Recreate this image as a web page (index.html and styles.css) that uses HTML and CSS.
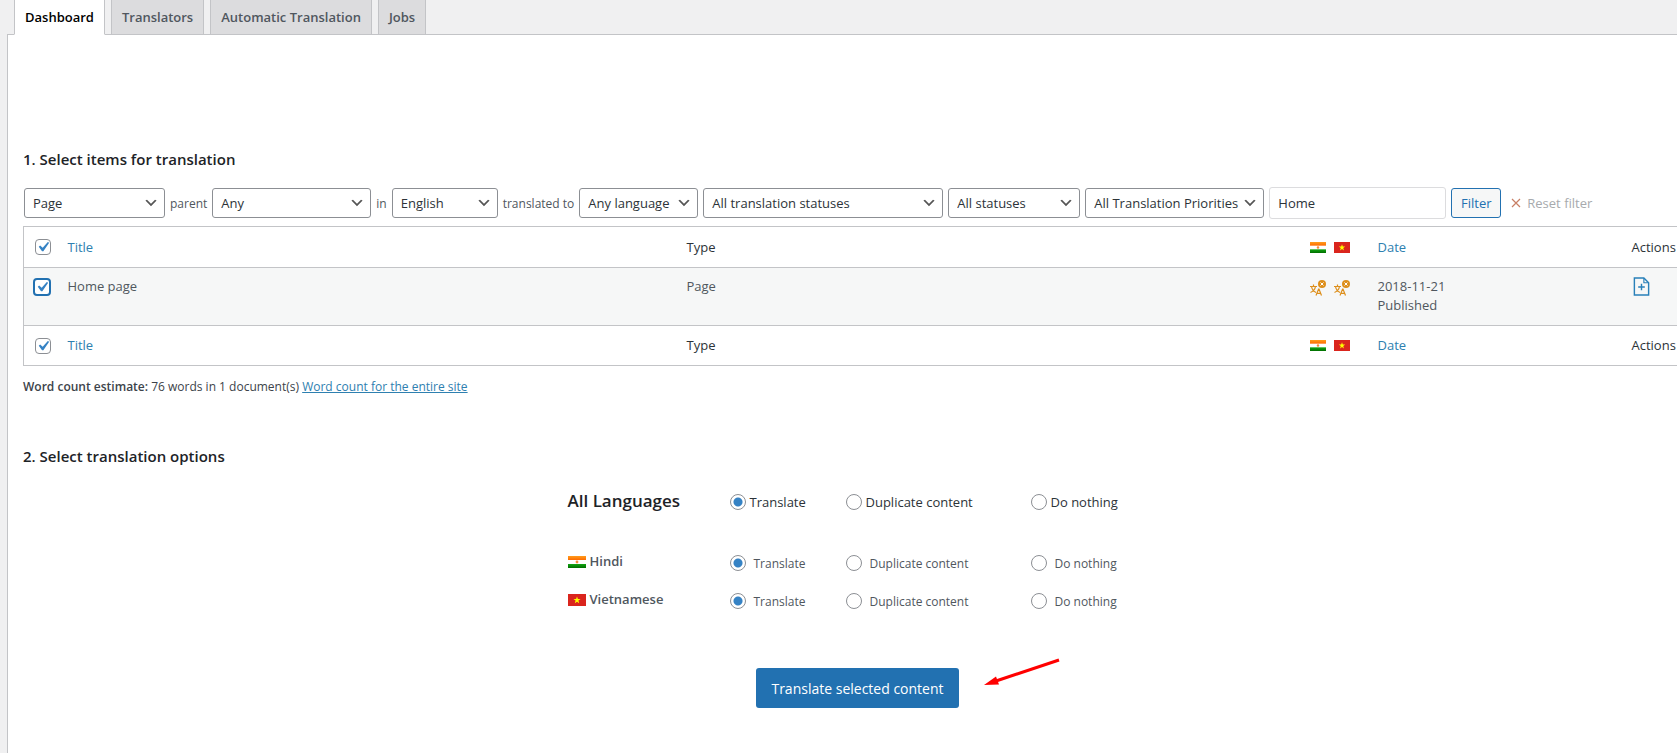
FILE: index.html
```html
<!DOCTYPE html>
<html lang="en">

<head>
    <meta charset="utf-8" />
    <meta name="viewport" content="width=device-width, initial-scale=1.0">
    <title>Translation Management</title>
    <link rel="stylesheet" href="styles.css">
</head>

<body>
    <!-- shared icons -->
    <svg class="sprite" aria-hidden="true">
        <linearGradient id="saffron" x2="0" y2="1">
            <stop offset="0" stop-color="#ff9d1c" />
            <stop offset="1" stop-color="#ff6a00" />
        </linearGradient>
        <linearGradient id="green" x2="0" y2="1">
            <stop offset="0" stop-color="#12a512" />
            <stop offset="1" stop-color="#006e00" />
        </linearGradient>
        <symbol id="flag-hi" viewBox="0 0 18 12" preserveAspectRatio="none">
            <rect width="18" height="12" fill="#fff" />
            <rect width="18" height="4" fill="url(#saffron)" />
            <rect y="8" width="18" height="4" fill="url(#green)" />
            <circle cx="9" cy="6" r="1.4" fill="#f58a3c" />
        </symbol>
        <symbol id="flag-vi" viewBox="0 0 18 12" preserveAspectRatio="none">
            <rect width="18" height="12" fill="#da251d" />
            <path d="M9 2.4l.9 2.6h2.7l-2.2 1.6.8 2.7L9 7.7 6.8 9.3l.8-2.7L5.4 5h2.7z" fill="#ff0" />
        </symbol>
        <symbol id="not-translated" viewBox="0 0 16 16">
            <g fill="none" stroke="#dd8f1c" stroke-width="1.2">
                <path d="M0 6.5h7M3.5 4.5v2M1.5 6.5c.5 3 2.2 4.7 4.500 6M5.500 6.500c-.5 3-2.500 5-5 6" />
                <path d="M6 15.500l2.600-6.500h.4l2.500 6.500M7 13.300h3.800" />
            </g>
            <circle cx="12" cy="4" r="4" fill="#dd8f1c" />
            <path d="M10.500 2.500l3 3m0-3l-3 3" stroke="#fff" />
        </symbol>
        <symbol id="add-doc" viewBox="0 0 17 20">
            <g fill="none" stroke="#2980b9" stroke-width="1.5">
                <path d="M1 1h10l5 5v13H1z" />
                <path d="M11 1v5h5" stroke-width="1.2" />
                <path d="M5 10.500h7M8.500 7v7" />
            </g>
        </symbol>
    </svg>

    <nav class="tabs">
        <a class="tab active" href="#">Dashboard</a>
        <a class="tab" href="#">Translators</a>
        <a class="tab" href="#">Automatic Translation</a>
        <a class="tab" href="#">Jobs</a>
    </nav>

    <main class="panel">
        <h2>1. Select items for translation</h2>
        <form class="filters">
            <select class="w-type" aria-label="Type">
                <option>Page</option>
            </select>
            <label for="parent">parent</label>
            <select class="w-parent" id="parent">
                <option>Any</option>
            </select>
            <label for="from">in</label>
            <select class="w-from" id="from">
                <option>English</option>
            </select>
            <label for="to">translated to</label>
            <select class="w-to" id="to">
                <option>Any language</option>
            </select>
            <select class="w-translation" aria-label="Translation status">
                <option>All translation statuses</option>
            </select>
            <select class="w-status" aria-label="Status">
                <option>All statuses</option>
            </select>
            <select class="w-priority" aria-label="Translation priority">
                <option>All Translation Priorities</option>
            </select>
            <input class="search" type="text" value="Home" aria-label="Title">
            <button class="filterBtn" type="button">Filter</button>
            <button class="resetBtn" type="button">
                <svg width="10" height="10" viewBox="0 0 10 10"><path d="M1 1l8 8M9 1l-8 8" stroke="#c87f65" stroke-width="1.2" /></svg>
                Reset filter
            </button>
        </form>

        <table class="items">
            <thead>
                <tr>
                    <th class="col-check"><input type="checkbox" checked aria-label="Select all"></th>
                    <th class="col-title"><a href="#">Title</a></th>
                    <th class="col-type">Type</th>
                    <th class="col-lang">
                        <svg class="flag"><use href="#flag-hi" /></svg>
                        <svg class="flag"><use href="#flag-vi" /></svg>
                    </th>
                    <th class="col-date"><a href="#">Date</a></th>
                    <th class="col-actions">Actions</th>
                </tr>
            </thead>
            <tbody>
                <tr>
                    <td class="col-check"><input class="focused" type="checkbox" checked aria-label="Select Home page"></td>
                    <td>Home page</td>
                    <td>Page</td>
                    <td class="col-lang">
                        <svg class="status"><use href="#not-translated" /></svg>
                        <svg class="status"><use href="#not-translated" /></svg>
                    </td>
                    <td>2018-11-21<br>Published</td>
                    <td><a href="#" aria-label="Add note"><svg class="addDoc"><use href="#add-doc" /></svg></a></td>
                </tr>
            </tbody>
            <tfoot>
                <tr>
                    <th class="col-check"><input type="checkbox" checked aria-label="Select all"></th>
                    <th><a href="#">Title</a></th>
                    <th>Type</th>
                    <th class="col-lang">
                        <svg class="flag"><use href="#flag-hi" /></svg>
                        <svg class="flag"><use href="#flag-vi" /></svg>
                    </th>
                    <th><a href="#">Date</a></th>
                    <th>Actions</th>
                </tr>
            </tfoot>
        </table>

        <p class="wordCount"><strong>Word count estimate:</strong> 76 words in 1 document(s) <a href="#">Word count for the entire site</a></p>

        <h2>2. Select translation options</h2>
        <form class="options">
            <div class="row all">
                <strong>All Languages</strong>
                <label><input type="radio" name="all" checked>Translate</label>
                <label><input type="radio" name="all">Duplicate content</label>
                <label><input type="radio" name="all">Do nothing</label>
            </div>
            <div class="row">
                <strong><svg class="flag"><use href="#flag-hi" /></svg>Hindi</strong>
                <label><input type="radio" name="hi" checked>Translate</label>
                <label><input type="radio" name="hi">Duplicate content</label>
                <label><input type="radio" name="hi">Do nothing</label>
            </div>
            <div class="row">
                <strong><svg class="flag"><use href="#flag-vi" /></svg>Vietnamese</strong>
                <label><input type="radio" name="vi" checked>Translate</label>
                <label><input type="radio" name="vi">Duplicate content</label>
                <label><input type="radio" name="vi">Do nothing</label>
            </div>
            <div class="submit">
                <button class="translateBtn" type="button">Translate selected content</button>
                <svg class="arrow" width="76" height="30" viewBox="0 0 76 30">
                    <path d="M75 2L12 23" stroke="#f00" stroke-width="3" />
                    <path d="M0 27L12 18.500 15 26.500z" fill="#f00" />
                </svg>
            </div>
        </form>
    </main>
</body>

</html>
```

FILE: styles.css
```css
* {
    box-sizing: border-box;
}

body {
    margin: 0;
    min-height: 100vh;
    display: flex;
    flex-direction: column;
    overflow: hidden;
    background-color: #f0f0f1;
    color: #3c434a;
    font-family: "Segoe UI", "Open Sans", sans-serif;
    font-size: 13px;
    line-height: 19px;
}

a {
    color: #2e80b0;
    text-decoration: none;
}

.sprite {
    position: absolute;
    width: 0;
    height: 0;
}

/* tabs */
.tabs {
    display: flex;
    gap: 6px;
    padding-left: 14px;
    margin-bottom: -1px;
}

.tab {
    height: 35px;
    padding: 7px 10px;
    border: 1px solid #c3c4c7;
    border-top: none;
    background-color: #dcdcde;
    color: #50575e;
    font-weight: 600;
    line-height: 20px;
}

.tab.active {
    background-color: #fff;
    border-bottom-color: #fff;
    color: #000;
    z-index: 1;
}

/* the panel is wider than the window */
.panel {
    flex: 1;
    margin-left: 7px;
    margin-right: -33px;
    padding: 112px 17px 0 15px;
    background-color: #fff;
    border: 1px solid #c3c4c7;
    border-bottom: none;
}

h2 {
    margin: 0;
    color: #1d2327;
    font-size: 15px;
    font-weight: 600;
    line-height: 24px;
}

/* filters */
.filters {
    display: flex;
    align-items: center;
    gap: 5px;
    margin: 16px 0 7px 1px;
    color: #50575e;
}

.filters label {
    font-size: 12px;
}

select,
.search {
    flex: none;
    height: 30px;
    margin: 0;
    padding: 0 24px 0 8px;
    border: 1px solid #8c8f94;
    border-radius: 3px;
    background-color: #fff;
    color: #2c3338;
    font: inherit;
}

select {
    appearance: none;
    background-image: url("data:image/svg+xml,%3Csvg xmlns='http://www.w3.org/2000/svg' width='16' height='16' viewBox='0 0 20 20'%3E%3Cpath d='M5 6l5 5 5-5 2 1-7 7-7-7 2-1z' fill='%23555'/%3E%3C/svg%3E");
    background-repeat: no-repeat;
    background-position: right 5px center;
}

.w-type {
    width: 141px;
}

.w-parent {
    width: 159px;
}

.w-from {
    width: 106px;
}

.w-to {
    width: 119px;
}

.w-translation {
    width: 240px;
}

.w-status {
    width: 132px;
}

.w-priority {
    width: 179px;
}

.search {
    width: 177px;
    height: 32px;
    padding-right: 8px;
    border-color: #dcdcde;
}

.filterBtn {
    width: 50px;
    height: 30px;
    padding: 0;
    border: 1px solid #2271b1;
    border-radius: 3px;
    background-color: #f6f7f7;
    color: #2271b1;
    font: inherit;
}

.resetBtn {
    display: flex;
    align-items: center;
    gap: 6px;
    padding: 0 5px;
    border: none;
    background: none;
    color: #a7aaad;
    font: inherit;
}

/* items */
.items {
    width: 100%;
    table-layout: fixed;
    border-collapse: collapse;
    border: 1px solid #c3c4c7;
}

.items tr {
    border-bottom: 1px solid #c3c4c7;
}

.items th {
    height: 40px;
    padding: 0;
    color: #2c3338;
    font-weight: 400;
    text-align: left;
}

.items thead th {
    height: 41px;
}

.items td {
    height: 58px;
    padding: 9px 0;
    color: #50575e;
    vertical-align: top;
}

.items tbody tr {
    background-color: #f6f7f7;
}

.items .col-check {
    width: 44px;
    padding-left: 11px;
}

.items td.col-check {
    padding-left: 9px;
}

.col-type {
    width: 623px;
}

.col-lang {
    width: 68px;
}

.col-date {
    width: 254px;
}

.col-actions {
    width: 60px;
}

.col-lang svg {
    float: left;
    margin-right: 8px;
}

.items td.col-lang {
    padding-top: 12px;
}

svg.flag {
    width: 16px;
    height: 11px;
}

svg.status {
    width: 16px;
    height: 16px;
}

svg.addDoc {
    display: block;
    width: 17px;
    height: 19px;
    margin-left: 1px;
}

input[type="checkbox"],
input[type="radio"] {
    appearance: none;
    flex: none;
    display: block;
    width: 16px;
    height: 16px;
    margin: 0;
    border: 1px solid #8c8f94;
    border-radius: 4px;
    background-color: #fff;
}

input[type="checkbox"]:checked {
    background-image: url("data:image/svg+xml,%3Csvg xmlns='http://www.w3.org/2000/svg' viewBox='0 0 20 20'%3E%3Cpath d='M14.83 4.89l1.34.94-5.81 8.38H9.02L5.78 9.67l1.34-1.25 2.57 2.4z' fill='%233582c4'/%3E%3C/svg%3E");
    background-position: center;
    background-size: 20px;
}

input[type="checkbox"].focused {
    width: 18px;
    height: 18px;
    margin-top: 1px;
    border: 2px solid #2271b1;
}

input[type="radio"] {
    border-radius: 50%;
}

input[type="radio"]:checked {
    background-image: radial-gradient(circle, #3582c4 4px, transparent 5px);
}

.wordCount {
    margin: 11px 0 47px;
    font-size: 12px;
    line-height: 20px;
}

.wordCount strong {
    font-weight: 600;
}

.wordCount a {
    text-decoration: underline;
}

/* options */
.row {
    display: grid;
    grid-template-columns: 162px 116px 185px 117px;
    align-items: center;
    justify-content: center;
    height: 38px;
    color: #50575e;
    font-size: 12px;
}

.row.all {
    height: 30px;
    margin: 19px 0 27px;
    color: #2c3338;
    font-size: 13px;
}

.row strong {
    display: flex;
    align-items: center;
    gap: 4px;
    padding-bottom: 3px;
    font-size: 13px;
    font-weight: 600;
}

.row.all strong {
    color: #1d2327;
    font-size: 17px;
}

.row .flag {
    width: 18px;
    height: 12px;
}

.row label {
    display: flex;
    align-items: center;
    gap: 8px;
}

.row.all label {
    gap: 4px;
}

.submit {
    display: flex;
    justify-content: center;
    margin-top: 48px;
}

.translateBtn {
    height: 40px;
    padding: 0 15px;
    border: none;
    border-radius: 3px;
    background-color: #2271b1;
    color: #fff;
    font: inherit;
    font-size: 14px;
}

/* arrow pointing at the button, does not take part in centering */
.arrow {
    margin: -10px -101px 0 25px;
}
```
